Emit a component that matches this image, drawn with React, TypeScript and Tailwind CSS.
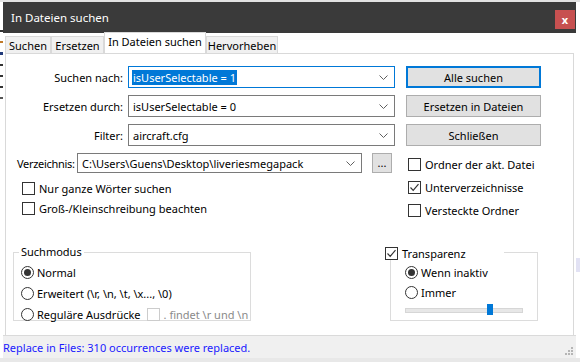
import React from 'react';

const ui = "font-['Noto_Sans',sans-serif] text-[11px] leading-none text-black";

function Chevron() {
  return (
    <svg width="9" height="5" viewBox="0 0 9 5" className="shrink-0">
      <path d="M0.5 0.5 L4.5 4.5 L8.5 0.5" fill="none" stroke="#606060" strokeWidth="1" />
    </svg>
  );
}

function Combo({ value, w, h = 'h-[22px]', focused = false, selected = false }: { value: string; w: string; h?: string; focused?: boolean; selected?: boolean }) {
  return (
    <div className={`flex shrink-0 items-center justify-between border bg-white pl-[3px] pr-[6px] ${h} ${w} ${focused ? 'border-[#0078d7]' : 'border-[#7a7a7a]'}`}>
      <span className={`whitespace-nowrap px-[1px] py-[2px] ${selected ? 'bg-[#0078d7] text-white' : ''}`}>{value}</span>
      <Chevron />
    </div>
  );
}

function Btn({ label, primary = false }: { label: string; primary?: boolean }) {
  return (
    <div className={`flex h-[22px] w-[135px] shrink-0 items-center justify-center bg-[#e1e1e1] ${primary ? 'border-2 border-[#0078d7]' : 'border border-[#adadad]'}`}>
      {label}
    </div>
  );
}

function Check({ label, checked = false, disabled = false }: { label: string; checked?: boolean; disabled?: boolean }) {
  return (
    <div className="flex h-[13px] items-center gap-[4px] whitespace-nowrap">
      <div className={`flex h-[13px] w-[13px] shrink-0 items-center justify-center border bg-white ${disabled ? 'border-[#cccccc]' : 'border-[#333333]'}`}>
        {checked && (
          <svg width="11" height="11" viewBox="0 0 11 11">
            <path d="M1.5 5.5 L4.2 8.3 L9.5 2.2" fill="none" stroke="#333333" strokeWidth="1.2" />
          </svg>
        )}
      </div>
      <span className={disabled ? 'text-[#8a8a8a]' : ''}>{label}</span>
    </div>
  );
}

function Radio({ label, checked = false }: { label: string; checked?: boolean }) {
  return (
    <div className="flex h-[13px] items-center gap-[3px] whitespace-nowrap">
      <div className="flex h-[13px] w-[13px] shrink-0 items-center justify-center rounded-full border border-[#333333] bg-white">
        {checked && <div className="h-[7px] w-[7px] rounded-full bg-[#333333]" />}
      </div>
      <span>{label}</span>
    </div>
  );
}

const tabs = [
  { label: 'Suchen', w: 'w-[46px]', active: false },
  { label: 'Ersetzen', w: 'w-[53px]', active: false },
  { label: 'In Dateien suchen', w: 'w-[102px]', active: true },
  { label: 'Hervorheben', w: 'w-[72px]', active: false },
];

export default function App() {
  return (
    <div className={`flex h-[362px] w-[580px] flex-col overflow-hidden bg-[#ececec] ${ui}`}>
      <div className="h-[2px] shrink-0 bg-[#e2e2e2]" />
      <div className="flex h-[356px] shrink-0">
        {/* editor peeking out on the left */}
        <div className="flex w-[3px] shrink-0 flex-col gap-[9px] bg-white pt-[28px]">
          <div className="h-[2px] w-[3px] bg-[#333]" />
          <div className="h-[2px] w-[3px] bg-[#c07a2a]" />
          <div className="h-[3px] w-[3px] bg-[#223a7a]" />
          <div className="h-[2px] w-[3px] bg-[#333]" />
          <div className="h-[2px] w-[3px] bg-[#333]" />
          <div className="h-[2px] w-[3px] bg-[#333]" />
          <div className="h-[2px] w-[3px] bg-[#555]" />
        </div>

        {/* dialog */}
        <div className="flex w-[573px] shrink-0 flex-col bg-white">
          <div className="flex h-[31px] shrink-0 items-start justify-between bg-[#3a3a3a]">
            <span className="pl-[8px] pt-[10px] text-[11.5px] text-white">In Dateien suchen</span>
            <div className="mr-[1px] mt-[8px] flex h-[19px] w-[20px] items-center justify-center bg-[#c75050] text-[11px] font-bold text-white">x</div>
          </div>

          <div className="flex h-[20px] shrink-0 items-end pl-[2px]">
            {tabs.map((t) => (
              <div
                key={t.label}
                className={`flex shrink-0 items-center justify-center whitespace-nowrap border border-b-0 ${t.w} ${t.active ? 'h-[21px] border-[#d9d9d9] bg-white pb-[3px]' : 'h-[17px] border-[#d9d9d9] bg-[#f0f0f0]'}`}
              >
                {t.label}
              </div>
            ))}
          </div>

          <div className="ml-[2px] mr-[2px] flex h-[282px] shrink-0 flex-col border-l border-r border-t border-[#d9d9d9]">
            <div className="flex flex-col gap-[7px] pt-[12px]">
              <div className="flex items-center">
                <span className="w-[122px] shrink-0 pr-[5px] text-right">Suchen nach:</span>
                <Combo value="isUserSelectable = 1" w="w-[267px]" focused selected />
                <div className="ml-[11px]"><Btn label="Alle suchen" primary /></div>
              </div>
              <div className="flex items-center">
                <span className="w-[122px] shrink-0 pr-[5px] text-right">Ersetzen durch:</span>
                <Combo value="isUserSelectable = 0" w="w-[267px]" />
                <div className="ml-[11px]"><Btn label="Ersetzen in Dateien" /></div>
              </div>
              <div className="flex items-center">
                <span className="w-[122px] shrink-0 pr-[5px] text-right">Filter:</span>
                <Combo value="aircraft.cfg" w="w-[267px]" />
                <div className="ml-[11px]"><Btn label="Schließen" /></div>
              </div>
            </div>

            <div className="mt-[7px] flex">
              <div className="flex w-[402px] shrink-0 flex-col">
                <div className="flex items-center pl-[11px]">
                  <span className="w-[60px] shrink-0 tracking-[-0.3px]">Verzeichnis:</span>
                  <Combo value="C:\Users\Guens\Desktop\liveriesmegapack" w="w-[285px]" h="h-[20px]" />
                  <div className="ml-[10px] flex h-[20px] w-[20px] items-center justify-center border border-[#adadad] bg-[#e1e1e1] pb-[2px]">...</div>
                </div>
                <div className="mt-[9px] flex flex-col gap-[7px] pl-[16px]">
                  <Check label="Nur ganze Wörter suchen" />
                  <Check label="Groß-/Kleinschreibung beachten" />
                </div>
              </div>
              <div className="mt-[5px] flex flex-col gap-[10px]">
                <Check label="Ordner der akt. Datei" />
                <Check label="Unterverzeichnisse" checked />
                <Check label="Versteckte Ordner" />
              </div>
            </div>

            <div className="mt-[35px] flex">
              <div className="relative ml-[7px] h-[69px] w-[238px] shrink-0 border border-[#dcdcdc]">
                <span className="absolute left-[5px] top-[-7px] bg-white px-[2px]">Suchmodus</span>
                <div className="flex flex-col gap-[8px] pl-[7px] pt-[13px]">
                  <Radio label="Normal" checked />
                  <Radio label="Erweitert (\r, \n, \t, \x..., \0)" />
                  <div className="flex items-center gap-[6px]">
                    <Radio label="Reguläre Ausdrücke" />
                    <Check label=". findet \r und \n" disabled />
                  </div>
                </div>
              </div>

              <div className="relative ml-[139px] h-[69px] w-[148px] shrink-0 border border-[#dcdcdc]">
                <div className="absolute left-[-6px] top-[-6px] w-[119px] bg-white">
                  <Check label="Transparenz" checked />
                </div>
                <div className="flex flex-col gap-[7px] pl-[14px] pt-[13px]">
                  <Radio label="Wenn inaktiv" checked />
                  <Radio label="Immer" />
                  <div className="relative mt-[2px] h-[5px] w-[118px] border border-[#d6d6d6] bg-[#e7e7e7]">
                    <div className="absolute left-[81px] top-[-5px] h-[11px] w-[6px] bg-[#0078d7]" />
                  </div>
                </div>
              </div>
            </div>
          </div>

          <div className="relative flex h-[23px] shrink-0 items-center border-t border-[#dadada] bg-[#f0f0f0]">
            <span className="whitespace-nowrap text-[#1a1aff]">Replace in Files: 310 occurrences were replaced.</span>
            <svg width="9" height="9" viewBox="0 0 9 9" className="absolute bottom-[2px] right-[2px]">
              <rect x="6" y="0" width="2" height="2" fill="#b5b5b5" />
              <rect x="3" y="3" width="2" height="2" fill="#b5b5b5" />
              <rect x="6" y="3" width="2" height="2" fill="#b5b5b5" />
              <rect x="0" y="6" width="2" height="2" fill="#b5b5b5" />
              <rect x="3" y="6" width="2" height="2" fill="#b5b5b5" />
              <rect x="6" y="6" width="2" height="2" fill="#b5b5b5" />
            </svg>
          </div>
        </div>

        {/* editor peeking out on the right */}
        <div className="flex w-[4px] shrink-0 flex-col bg-white pt-[256px]">
          <div className="h-[14px] w-[4px] bg-[#e2e2f4]" />
        </div>
      </div>
      <div className="h-[4px] shrink-0 bg-[#e8e8e8]" />
    </div>
  );
}
